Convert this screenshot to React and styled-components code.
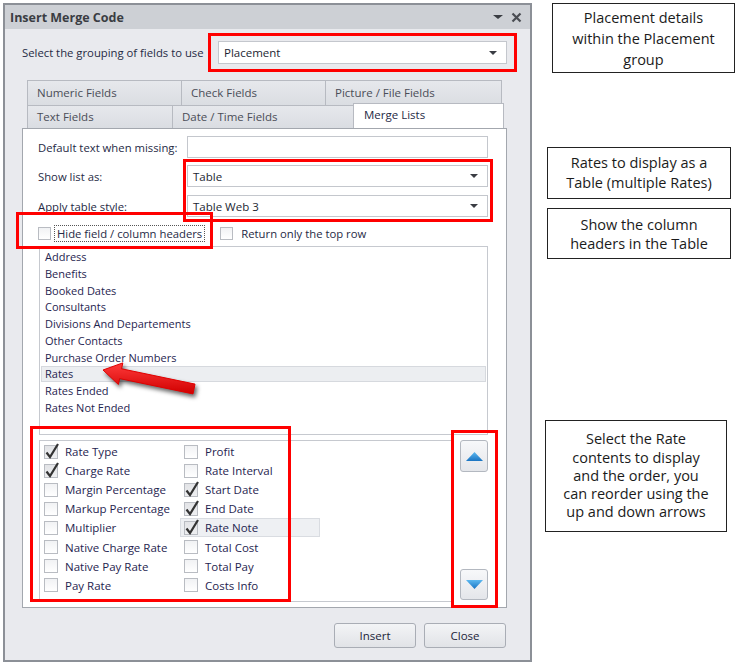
import React from "react";
import styled, { createGlobalStyle } from "styled-components";

const GlobalStyle = createGlobalStyle`
  html, body { margin: 0; padding: 0; background: #fff; }
  body { font-family: "Open Sans", "Noto Sans", sans-serif; }
`;

const Page = styled.div`
  position: relative;
  width: 740px;
  height: 667px;
  display: flex;
  align-items: flex-start;
  overflow: hidden;
  background: #fff;
`;

const Dialog = styled.div`
  margin: 3px 0 0 3px;
  width: 529px;
  height: 659px;
  box-sizing: border-box;
  border: 2px solid #8c9097;
  background: #e9eaee;
  font-family: "Open Sans", sans-serif;
  font-size: 11.3px;
  color: #262a45;
`;

const TitleBar = styled.div`
  height: 24px;
  display: flex;
  align-items: center;
  padding: 0 8px 0 5px;
  background: #cdd0d5;
`;

const Title = styled.div`
  flex: 1;
  font-weight: 700;
  font-size: 12.5px;
  color: #3a3d43;
`;

const TitleIcons = styled.div`
  display: flex;
  align-items: center;
  gap: 8px;
`;

const Caret = styled.span`
  display: inline-block;
  width: 0;
  height: 0;
  border-left: ${(p) => p.$w || 4}px solid transparent;
  border-right: ${(p) => p.$w || 4}px solid transparent;
  border-top: ${(p) => (p.$w ? p.$w - 1 : 4)}px solid ${(p) => p.$color || "#3a3d43"};
`;

const Body = styled.div`
  padding: 0 23px 0 17px;
`;

const SelectRow = styled.div`
  margin-top: 12px;
  display: grid;
  grid-template-columns: 196px 289px;
  align-items: center;
`;

const Label = styled.div`
  white-space: nowrap;
`;

const Field = styled.div`
  height: ${(p) => p.$h || 22}px;
  box-sizing: border-box;
  border: 1px solid #c4c7cd;
  background: #fff;
  display: flex;
  align-items: center;
  padding: 0 9px 0 5px;
  color: #1c1f33;
  font-size: 11.5px;
`;

const FieldText = styled.span`
  flex: 1;
`;

const Tabs = styled.div`
  margin-top: 16px;
`;

const TabRow = styled.div`
  display: flex;
  align-items: flex-end;
  height: ${(p) => p.$h}px;
  padding-left: 5px;
`;

const Tab = styled.div`
  position: relative;
  z-index: ${(p) => (p.$active ? 2 : 1)};
  width: ${(p) => p.$w}px;
  height: ${(p) => p.$h}px;
  box-sizing: border-box;
  margin-right: -1px;
  border: 1px solid #b7bac1;
  border-bottom: none;
  background: ${(p) =>
    p.$active ? "#fff" : "linear-gradient(#e6e8ec, #dadde2)"};
  display: flex;
  align-items: center;
  padding-left: ${(p) => (p.$active ? 10 : 9)}px;
  padding-bottom: ${(p) => (p.$active ? 3 : 2)}px;
  color: ${(p) => (p.$active ? "#262a45" : "#4a4d57")};
  font-size: 11.5px;
`;

const Panel = styled.div`
  position: relative;
  width: 485px;
  box-sizing: border-box;
  border: 1px solid #a3a7ae;
  background: #fff;
  padding: 7px 18px 5px 15px;
`;

const FormRow = styled.div`
  display: grid;
  grid-template-columns: 149px 301px;
  align-items: center;
  margin-top: ${(p) => p.$mt || 0}px;
`;

const OptionsRow = styled.div`
  margin-top: 8px;
  height: 17px;
  display: flex;
  align-items: center;
`;

const Option = styled.div`
  display: flex;
  align-items: center;
  margin-right: ${(p) => p.$mr || 0}px;
`;

const OptionText = styled.span`
  margin-left: ${(p) => (p.$focus ? 3 : 5)}px;
  padding: 0 2px;
  border: 1px ${(p) => (p.$focus ? "dotted #555" : "solid transparent")};
  line-height: 15px;
`;

const Box = styled.span`
  position: relative;
  flex: none;
  width: ${(p) => p.$size}px;
  height: ${(p) => p.$size}px;
  box-sizing: border-box;
  border: 1px solid #b9bcc2;
  background: ${(p) =>
    p.$checked ? "linear-gradient(#e2e3e6, #eeeff1)" : "linear-gradient(#f1f2f4, #fff)"};

  svg {
    position: absolute;
    left: -1px;
    top: -4px;
  }
`;

const List = styled.div`
  margin: 4px 0 0 1px;
  width: 449px;
  height: 189px;
  box-sizing: border-box;
  border: 1px solid #c6c9cf;
  padding-top: 1px;
`;

const ListItem = styled.div`
  height: 16.8px;
  box-sizing: border-box;
  padding-left: 3px;
  display: flex;
  align-items: center;
  font-size: 11px;
  color: #1f2550;
  background: ${(p) => (p.$selected ? "#eceef1" : "transparent")};
  border: 1px solid ${(p) => (p.$selected ? "#d6d9de" : "transparent")};
  margin: 0 1px;
`;

const Bottom = styled.div`
  margin-top: 5px;
  display: flex;
`;

const CheckList = styled.div`
  margin-left: 1px;
  width: 413px;
  height: 162px;
  box-sizing: border-box;
  border: 1px solid #c6c9cf;
  border-right: none;
  padding: 1px 0 0 1px;
  display: grid;
  grid-template-columns: 140px 139px;
  grid-template-rows: repeat(8, 19.1px);
  grid-auto-flow: column;
`;

const CheckItem = styled.div`
  display: flex;
  align-items: center;
  gap: 7px;
  padding-left: 3px;
  box-sizing: border-box;
  font-size: 11.5px;
  color: #1f2550;
  background: ${(p) => (p.$hl ? "#eef0f3" : "transparent")};
  border: 1px solid ${(p) => (p.$hl ? "#d9dce1" : "transparent")};
  margin-left: -1px;
`;

const OrderCol = styled.div`
  margin-left: 9px;
  height: 160px;
  display: flex;
  flex-direction: column;
  justify-content: space-between;
`;

const OrderButton = styled.div`
  width: 28px;
  height: ${(p) => p.$h}px;
  box-sizing: border-box;
  border: 1px solid #b3b8c0;
  border-radius: 3px;
  background: linear-gradient(#f7f8fa, #e4e6ea);
  display: flex;
  align-items: center;
  justify-content: center;
`;

const Footer = styled.div`
  margin: 15px 1px 0 0;
  display: flex;
  justify-content: flex-end;
  gap: 8px;
`;

const Button = styled.div`
  width: 82px;
  height: 25px;
  box-sizing: border-box;
  border: 1px solid #a9adb5;
  border-radius: 3px;
  background: linear-gradient(#f3f4f6, #e1e3e7);
  display: flex;
  align-items: center;
  justify-content: center;
  font-size: 11.5px;
  color: #22243a;
`;

const Notes = styled.div`
  margin-left: 13px;
  display: flex;
  flex-direction: column;
`;

const Note = styled.div`
  margin-top: ${(p) => p.$mt}px;
  margin-left: ${(p) => p.$ml || 0}px;
  width: ${(p) => p.$w}px;
  height: ${(p) => p.$h}px;
  box-sizing: border-box;
  border: 1px solid #222;
  display: flex;
  flex-direction: column;
  justify-content: center;
  text-align: center;
  white-space: nowrap;
  font-family: "Open Sans", sans-serif;
  font-size: 14.5px;
  line-height: ${(p) => p.$lh}px;
  color: #1b1b1b;
`;

const Highlight = styled.div`
  position: absolute;
  left: ${(p) => p.$x}px;
  top: ${(p) => p.$y}px;
  width: ${(p) => p.$w}px;
  height: ${(p) => p.$h}px;
  box-sizing: border-box;
  border: 3px solid #ff0000;
  pointer-events: none;
`;

const Pointer = styled.svg`
  position: absolute;
  left: 95px;
  top: 355px;
  filter: drop-shadow(2px 3px 2px rgba(0, 0, 0, 0.6));
`;

function Checkbox({ checked, size = 14 }) {
  return (
    <Box $size={size} $checked={checked}>
      {checked && (
        <svg width={size + 2} height={size + 4} viewBox="0 0 16 18">
          <path d="M2.5 10.5 L6 15 L14 2" fill="none" stroke="#333" strokeWidth="2.2" />
        </svg>
      )}
    </Box>
  );
}

function Arrow({ up }) {
  return (
    <svg width="17" height="9" viewBox="0 0 17 9">
      <defs>
        <linearGradient id={up ? "gu" : "gd"} x1="0" y1="0" x2="0" y2="1">
          <stop offset="0" stopColor="#5cb8f0" />
          <stop offset="1" stopColor="#1a74c2" />
        </linearGradient>
      </defs>
      <polygon points={up ? "0,9 8.5,0 17,9" : "0,0 17,0 8.5,9"} fill={`url(#${up ? "gu" : "gd"})`} />
    </svg>
  );
}

const listItems = [
  "Address",
  "Benefits",
  "Booked Dates",
  "Consultants",
  "Divisions And Departements",
  "Other Contacts",
  "Purchase Order Numbers",
  "Rates",
  "Rates Ended",
  "Rates Not Ended",
];

const rateFields = [
  ["Rate Type", true],
  ["Charge Rate", true],
  ["Margin Percentage", false],
  ["Markup Percentage", false],
  ["Multiplier", false],
  ["Native Charge Rate", false],
  ["Native Pay Rate", false],
  ["Pay Rate", false],
  ["Profit", false],
  ["Rate Interval", false],
  ["Start Date", true],
  ["End Date", true],
  ["Rate Note", true],
  ["Total Cost", false],
  ["Total Pay", false],
  ["Costs Info", false],
];

const notes = [
  { mt: 3, ml: 7, w: 183, h: 70, lh: 21, lines: ["Placement details", "within the Placement", "group"] },
  { mt: 74, ml: 2, w: 184, h: 52, lh: 20, lines: ["Rates to display as a", "Table (multiple Rates)"] },
  { mt: 9, ml: 2, w: 184, h: 51, lh: 19, lines: ["Show the column", "headers in the Table"] },
  {
    mt: 161,
    ml: 0,
    w: 182,
    h: 112,
    lh: 18.3,
    lines: ["Select the Rate", "contents to display", "and the order, you", "can reorder using the", "up and down arrows"],
  },
];

export default function App() {
  return (
    <Page>
      <GlobalStyle />
      <Dialog>
        <TitleBar>
          <Title>Insert Merge Code</Title>
          <TitleIcons>
            <Caret $w={5} />
            <svg width="11" height="11" viewBox="0 0 11 11">
              <path d="M1.5 1.5 L9.5 9.5 M9.5 1.5 L1.5 9.5" stroke="#4a4d53" strokeWidth="2.2" />
            </svg>
          </TitleIcons>
        </TitleBar>
        <Body>
          <SelectRow>
            <Label>Select the grouping of fields to use</Label>
            <Field $h={23}>
              <FieldText>Placement</FieldText>
              <Caret />
            </Field>
          </SelectRow>

          <Tabs>
            <TabRow $h={25}>
              <Tab $w={155} $h={25}>Numeric Fields</Tab>
              <Tab $w={145} $h={25}>Check Fields</Tab>
              <Tab $w={177} $h={25}>Picture / File Fields</Tab>
            </TabRow>
            <TabRow $h={23}>
              <Tab $w={146} $h={23}>Text Fields</Tab>
              <Tab $w={182} $h={23}>Date / Time Fields</Tab>
              <Tab $w={151} $h={25} $active>Merge Lists</Tab>
            </TabRow>
          </Tabs>

          <Panel>
            <FormRow>
              <Label>Default text when missing:</Label>
              <Field />
            </FormRow>
            <FormRow $mt={7}>
              <Label>Show list as:</Label>
              <Field>
                <FieldText>Table</FieldText>
                <Caret />
              </Field>
            </FormRow>
            <FormRow $mt={8}>
              <Label>Apply table style:</Label>
              <Field>
                <FieldText>Table Web 3</FieldText>
                <Caret />
              </Field>
            </FormRow>

            <OptionsRow>
              <Option $mr={15}>
                <Checkbox size={13} />
                <OptionText $focus>Hide field / column headers</OptionText>
              </Option>
              <Option>
                <Checkbox size={13} />
                <OptionText>Return only the top row</OptionText>
              </Option>
            </OptionsRow>

            <List>
              {listItems.map((item) => (
                <ListItem key={item} $selected={item === "Rates"}>
                  {item}
                </ListItem>
              ))}
            </List>

            <Bottom>
              <CheckList>
                {rateFields.map(([name, checked]) => (
                  <CheckItem key={name} $hl={name === "Rate Note"}>
                    <Checkbox checked={checked} />
                    {name}
                  </CheckItem>
                ))}
              </CheckList>
              <OrderCol>
                <OrderButton $h={32}>
                  <Arrow up />
                </OrderButton>
                <OrderButton $h={31}>
                  <Arrow />
                </OrderButton>
              </OrderCol>
            </Bottom>
          </Panel>

          <Footer>
            <Button>Insert</Button>
            <Button>Close</Button>
          </Footer>
        </Body>
      </Dialog>

      <Notes>
        {notes.map((n) => (
          <Note key={n.lines[0]} $mt={n.mt} $ml={n.ml} $w={n.w} $h={n.h} $lh={n.lh}>
            {n.lines.map((line) => (
              <span key={line}>{line}</span>
            ))}
          </Note>
        ))}
      </Notes>

      <Highlight $x={208} $y={33} $w={309} $h={39} />
      <Highlight $x={183} $y={159} $w={310} $h={63} />
      <Highlight $x={16} $y={212} $w={197} $h={37} />
      <Highlight $x={30} $y={426} $w={261} $h={176} />
      <Highlight $x={451} $y={430} $w={47} $h={178} />

      <Pointer width="110" height="48" viewBox="0 0 110 48">
        <defs>
          <linearGradient id="red" x1="0" y1="0" x2="0" y2="1">
            <stop offset="0" stopColor="#ff3b3b" />
            <stop offset="1" stopColor="#d00000" />
          </linearGradient>
        </defs>
        <polygon
          points="8,15 27.8,7.9 26.6,13.8 100,29.1 98,38.9 24.6,23.6 23.4,29.5"
          fill="url(#red)"
          stroke="#e00000"
          strokeWidth="1"
          strokeLinejoin="round"
        />
      </Pointer>
    </Page>
  );
}
